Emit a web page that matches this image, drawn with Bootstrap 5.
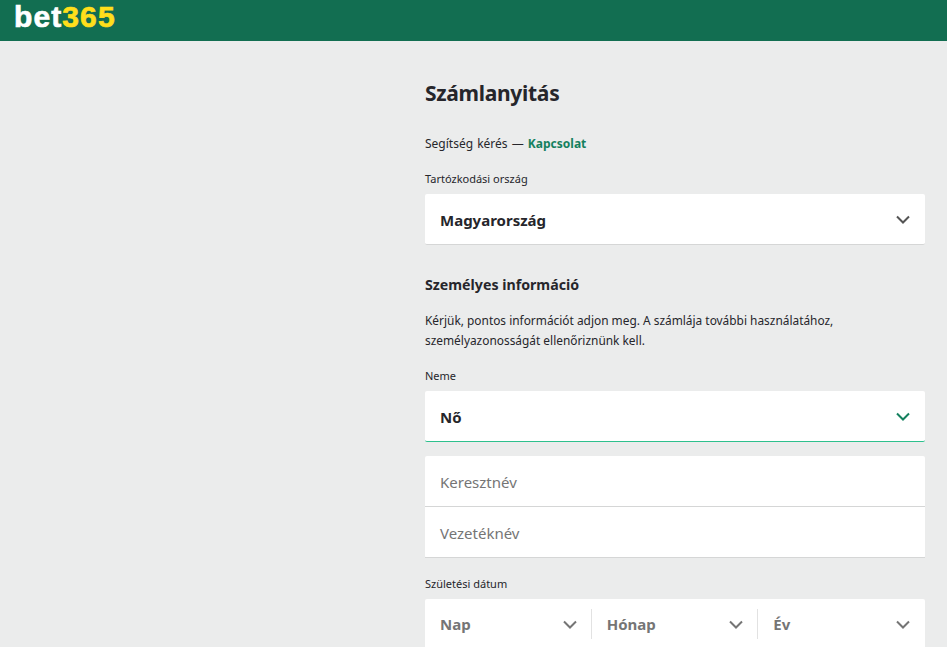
<!DOCTYPE html>
<html lang="hu">
  <head>
    <meta charset="UTF-8" />
    <meta name="viewport" content="width=device-width, initial-scale=1" />
    <title>Számlanyitás</title>
    <link href="https://cdn.jsdelivr.net/npm/bootstrap@5.3.0/dist/css/bootstrap.min.css" rel="stylesheet" />
    <style>
      html, body { height: 647px; overflow: hidden; }
      body { background: #ebecec; font-family: "Noto Sans", "Open Sans", sans-serif; color: #26262b; }
      .top-bar { height: 41px; background: #126e51; padding-left: 14px; }
      .logo { font-family: "Liberation Sans", sans-serif; font-weight: 700; font-size: 30px; line-height: normal; letter-spacing: 1.1px; color: #fff; -webkit-text-stroke: 0.7px currentColor; }
      .logo span { color: #ffdf1b; }
      .form-col { width: 500px; margin-right: 22px; }
      .page-title { font-size: 21px; font-weight: 700; line-height: 30px; letter-spacing: -0.3px; margin: 37px 0 0; }
      .help-line { font-size: 12px; line-height: 18px; word-spacing: 1px; margin: 27px 0 0; }
      .help-line a { color: #14805e; font-weight: 700; text-decoration: none; }
      .field-label { font-size: 11px; line-height: 16px; margin: 0 0 7px; }
      .label-first { margin-top: 18px; }
      .label-next { margin-top: 18px; }
      .select-box { height: 51px; background: #fff; border-radius: 2px; padding: 0 15px; border-bottom: 1px solid #d5d6d6; font-size: 15px; font-weight: 700; }
      .select-box span { padding-top: 2px; }
      .select-box svg { color: #545454; }
      .select-active { border-bottom-color: #2dc08d; }
      .select-active svg { color: #14805e; }
      .section-title { font-size: 14.2px; font-weight: 700; line-height: 20px; margin: 30px 0 0; }
      .intro-text { font-size: 11.9px; line-height: 20px; margin: 15px 0 0; }
      .name-group { background: #fff; border-radius: 2px; margin-top: 14px; }
      .name-input { height: 51px; padding: 2px 15px 0; border-bottom: 1px solid #d5d6d6; font-size: 15px; color: #757575; }
      .date-box { height: 60px; background: #fff; border-radius: 2px 2px 0 0; font-size: 15px; font-weight: 700; color: #757575; padding-top: 10px; }
      .date-part { height: 30px; padding: 0 15px; }
      .date-part.with-line { border-right: 1px solid #e2e2e2; padding-right: 14px; }
    </style>
  </head>
  <body>
    <!-- Header -->
    <header class="top-bar">
      <div class="logo">bet<span>365</span></div>
    </header>

    <!-- Form -->
    <main class="d-flex justify-content-end">
      <div class="form-col">
        <h1 class="page-title">Számlanyitás</h1>
        <p class="help-line">Segítség kérés — <a href="#">Kapcsolat</a></p>

        <p class="field-label label-first">Tartózkodási ország</p>
        <div class="select-box d-flex align-items-center justify-content-between">
          <span>Magyarország</span>
          <svg width="14" height="9" viewBox="0 0 14 9" fill="none" stroke="currentColor" stroke-width="2"><path d="M1 1.5 7 7.5 13 1.5" /></svg>
        </div>

        <h2 class="section-title">Személyes információ</h2>
        <p class="intro-text">Kérjük, pontos információt adjon meg. A számlája további használatához, személyazonosságát ellenőriznünk kell.</p>

        <p class="field-label label-next">Neme</p>
        <div class="select-box select-active d-flex align-items-center justify-content-between">
          <span>Nő</span>
          <svg width="14" height="9" viewBox="0 0 14 9" fill="none" stroke="currentColor" stroke-width="2"><path d="M1 1.5 7 7.5 13 1.5" /></svg>
        </div>

        <div class="name-group">
          <div class="name-input d-flex align-items-center">Keresztnév</div>
          <div class="name-input d-flex align-items-center">Vezetéknév</div>
        </div>

        <p class="field-label label-next">Születési dátum</p>
        <div class="date-box row g-0">
          <div class="col-4 date-part with-line d-flex align-items-center justify-content-between">
            <span>Nap</span>
            <svg width="14" height="9" viewBox="0 0 14 9" fill="none" stroke="currentColor" stroke-width="2"><path d="M1 1.5 7 7.5 13 1.5" /></svg>
          </div>
          <div class="col-4 date-part with-line d-flex align-items-center justify-content-between">
            <span>Hónap</span>
            <svg width="14" height="9" viewBox="0 0 14 9" fill="none" stroke="currentColor" stroke-width="2"><path d="M1 1.5 7 7.5 13 1.5" /></svg>
          </div>
          <div class="col-4 date-part d-flex align-items-center justify-content-between">
            <span>Év</span>
            <svg width="14" height="9" viewBox="0 0 14 9" fill="none" stroke="currentColor" stroke-width="2"><path d="M1 1.5 7 7.5 13 1.5" /></svg>
          </div>
        </div>
      </div>
    </main>

    <script src="https://cdn.jsdelivr.net/npm/bootstrap@5.3.0/dist/js/bootstrap.bundle.min.js"></script>
  </body>
</html>
